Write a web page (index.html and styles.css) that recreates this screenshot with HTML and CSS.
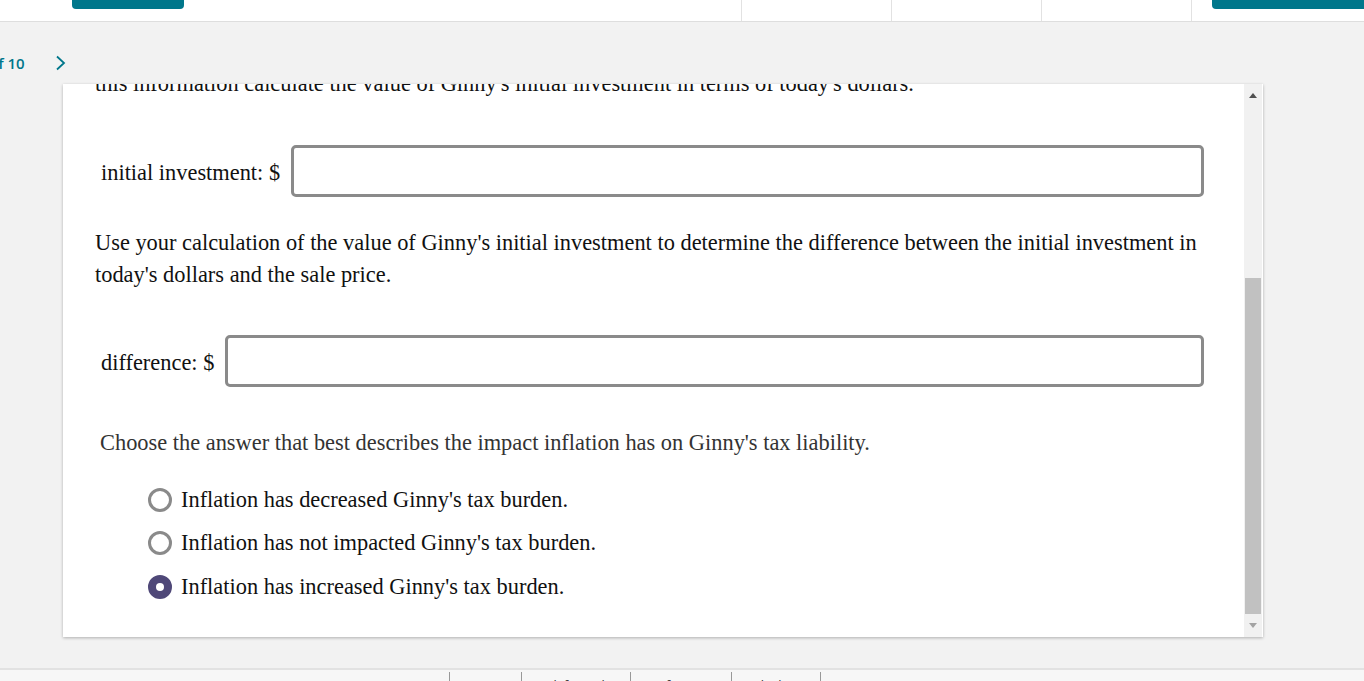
FILE: index.html
```html
<!DOCTYPE html>
<html lang="en">
<head>
<meta charset="utf-8">
<title>Question</title>
<link rel="stylesheet" href="styles.css">
</head>
<body>
<header class="topbar">
  <div class="top-left"><span class="tab-btn"></span></div>
  <div class="top-cells">
    <div class="top-cell"></div>
    <div class="top-cell"></div>
    <div class="top-cell"></div>
    <div class="top-cell top-cell-btn"><span class="tab-btn tab-btn-wide"></span></div>
  </div>
</header>

<nav class="qnav">
  <span class="qcount">of 10</span>
  <svg class="chev" width="12" height="16" viewBox="0 0 12 16"><polyline points="2,1.5 9,8 2,14.5" fill="none" stroke="#00778b" stroke-width="1.8"/></svg>
</nav>

<main class="card">
  <div class="scroll-content">
    <p class="intro">this information calculate the value of Ginny's initial investment in terms of today's dollars.</p>

    <div class="answer-row row-first">
      <label class="answer-label">initial investment: $</label>
      <input class="answer-input" type="text">
    </div>

    <p class="para">Use your calculation of the value of Ginny's initial investment to determine the difference between the initial investment in today's dollars and the sale price.</p>

    <div class="answer-row row-second">
      <label class="answer-label">difference: $</label>
      <input class="answer-input" type="text">
    </div>

    <p class="choose">Choose the answer that best describes the impact inflation has on Ginny's tax liability.</p>

    <ul class="choices">
      <li class="choice"><span class="radio"></span><span>Inflation has decreased Ginny's tax burden.</span></li>
      <li class="choice"><span class="radio"></span><span>Inflation has not impacted Ginny's tax burden.</span></li>
      <li class="choice"><span class="radio radio-on"></span><span>Inflation has increased Ginny's tax burden.</span></li>
    </ul>
  </div>
  <div class="scrollbar">
    <div class="sb-arrow sb-up"></div>
    <div class="sb-track"><div class="sb-thumb"></div></div>
    <div class="sb-arrow sb-down"></div>
  </div>
</main>

<footer class="bottombar">
  <div class="bb-cell bb-first"><span>Instructions</span></div>
  <div class="bb-cell bb-w72"><span>&nbsp;</span></div>
  <div class="bb-cell bb-w109"><span>Ask for Help</span></div>
  <div class="bb-cell bb-w101"><span>Reference</span></div>
  <div class="bb-cell bb-w89"><span>Calculator</span></div>
  <div class="bb-cell bb-last"><span>Hints</span></div>
</footer>
</body>
</html>
```

FILE: styles.css
```css
* { box-sizing: border-box; }

html, body {
  margin: 0;
  padding: 0;
}

body {
  width: 1364px;
  height: 681px;
  overflow: hidden;
  background: #f2f2f2;
  font-family: "Liberation Serif", "Times New Roman", serif;
  color: #111;
}

/* top bar */
.topbar {
  height: 22px;
  background: #fff;
  border-bottom: 1px solid #dedede;
  display: flex;
  justify-content: space-between;
}

.top-left {
  padding-left: 72px;
}

.tab-btn {
  display: block;
  width: 112px;
  height: 9px;
  background: #00778b;
  border-radius: 0 0 4px 4px;
}

.top-cells {
  display: flex;
  height: 21px;
}

.top-cell {
  width: 150px;
  border-left: 1px solid #e2e2e2;
}

.top-cell-btn {
  width: 173px;
  padding-left: 20px;
}

.tab-btn-wide {
  width: 160px;
}

/* question nav */
.qnav {
  height: 62px;
  padding-top: 31px;
  display: flex;
  align-items: flex-start;
  font-family: "Open Sans", "Noto Sans", sans-serif;
}

.qcount {
  margin-left: -11px;
  font-size: 15px;
  font-weight: 600;
  line-height: 20px;
  color: #00778b;
}

.chev {
  margin-left: 30px;
  margin-top: 2px;
}

/* card */
.card {
  margin-left: 63px;
  width: 1200px;
  height: 553px;
  background: #fff;
  box-shadow: 0 1px 3px rgba(0, 0, 0, 0.28);
  display: flex;
  overflow: hidden;
}

.scroll-content {
  flex: 1;
  padding-left: 32px;
  font-size: 22.4px;
  line-height: 32px;
  overflow: hidden;
}

.intro {
  margin: -16px 0 0;
  white-space: nowrap;
}

.answer-row {
  display: flex;
  align-items: center;
  gap: 11px;
  padding-left: 6px;
  margin-right: 40px;
}

.row-first { margin-top: 45px; }
.row-second { margin-top: 44px; }

.answer-label {
  white-space: nowrap;
  padding-top: 4px;
}

.answer-input {
  flex: 1;
  height: 52px;
  border: 3px solid #8a8a8a;
  border-radius: 5px;
  background: #fff;
  font: inherit;
  outline: none;
}

.para {
  margin: 30px 40px 0 0;
}

.choose {
  margin: 40px 0 0;
  padding-left: 5px;
  color: #333;
}

.choices {
  list-style: none;
  margin: 19px 0 0;
  padding: 0 0 0 53px;
}

.choice {
  height: 43.5px;
  display: flex;
  align-items: center;
  gap: 9px;
}

.radio {
  width: 24px;
  height: 24px;
  border-radius: 50%;
  border: 3px solid #8a8a8a;
  background: #fff;
  flex: none;
  display: flex;
  align-items: center;
  justify-content: center;
}

.radio-on {
  border-color: #4f4878;
  background: #4f4878;
}

.radio-on::after {
  content: "";
  width: 8px;
  height: 8px;
  border-radius: 50%;
  background: #fff;
}

/* fake scrollbar */
.scrollbar {
  width: 18px;
  margin-right: 1px;
  background: #f1f1f1;
  display: flex;
  flex-direction: column;
}

.sb-arrow {
  height: 24px;
  display: flex;
  align-items: center;
  justify-content: center;
}

.sb-arrow::after {
  content: "";
  width: 0;
  height: 0;
  border-left: 4px solid transparent;
  border-right: 4px solid transparent;
}

.sb-up::after {
  border-bottom: 5px solid #505050;
}

.sb-down::after {
  border-top: 5px solid #a3a3a3;
}

.sb-track {
  flex: 1;
  padding-top: 170px;
  padding-left: 1px;
  padding-right: 1px;
}

.sb-thumb {
  height: 336px;
  background: #c1c1c1;
}

/* bottom bar */
.bottombar {
  margin-top: 31px;
  height: 20px;
  border-top: 2px solid #e2e2e2;
  background: #f7f7f7;
  display: flex;
  padding-top: 2px;
  font-family: "Open Sans", "Noto Sans", sans-serif;
  font-size: 13px;
  color: #333;
}

.bb-cell {
  height: 18px;
  border-left: 1px solid #999;
  text-align: center;
  padding-top: 4px;
  line-height: 18px;
  overflow: hidden;
}

.bb-first {
  width: 449px;
  border-left: none;
  text-align: right;
  padding-right: 20px;
}

.bb-w72 { width: 72px; }
.bb-w109 { width: 109px; }
.bb-w101 { width: 101px; }
.bb-w89 { width: 89px; }
.bb-last { width: 120px; text-align: left; padding-left: 12px; }
```
